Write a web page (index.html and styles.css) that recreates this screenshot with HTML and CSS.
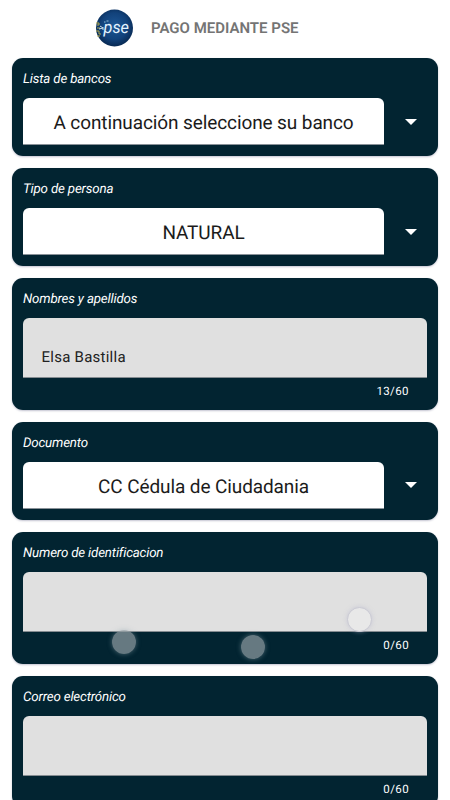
FILE: index.html
```html
<!DOCTYPE html>
<html lang="es">
<head>
<meta charset="utf-8">
<title>Pago mediante PSE</title>
<link rel="stylesheet" href="styles.css">
</head>
<body>
<header class="header">
  <svg class="logo" viewBox="0 0 38 38">
    <defs><radialGradient id="globe" cx="50%" cy="45%" r="55%"><stop offset="0" stop-color="#1d5795"/><stop offset=".65" stop-color="#12427b"/><stop offset="1" stop-color="#082952"/></radialGradient></defs>
    <circle cx="19.500" cy="19" r="18.500" fill="url(#globe)"/>
    <path d="M1 14h3v2H2m0 3h3m-4 3h3v3h2m-4 2h3" fill="none" stroke="#b2a94f" stroke-width="1"/>
    <path d="M5 17l3 2-4 1m4-2v3" fill="none" stroke="#cbdde6" stroke-width="1"/>
    <path d="M9 13h1.500M11.500 12h2" stroke="#91bdd8" stroke-width="1"/>
    <text class="logo-text" x="8.500" y="23.500" textLength="25.500" lengthAdjust="spacingAndGlyphs">pse</text>
  </svg>
  <h1 class="title">PAGO MEDIANTE PSE</h1>
</header>
<main class="form">
  <section class="card">
    <h2 class="label">Lista de bancos</h2>
    <div class="select"><div class="value">A continuación seleccione su banco</div><span class="arrow"></span></div>
  </section>
  <section class="card">
    <h2 class="label">Tipo de persona</h2>
    <div class="select"><div class="value">NATURAL</div><span class="arrow"></span></div>
  </section>
  <section class="card card-input">
    <h2 class="label">Nombres y apellidos</h2>
    <div class="input">Elsa Bastilla</div>
    <div class="counter">13/60</div>
  </section>
  <section class="card">
    <h2 class="label">Documento</h2>
    <div class="select"><div class="value">CC Cédula de Ciudadania</div><span class="arrow"></span></div>
  </section>
  <section class="card card-input">
    <h2 class="label">Numero de identificacion</h2>
    <div class="input"></div>
    <div class="counter">0/60</div>
    <span class="touch touch-left"></span>
    <span class="touch touch-middle"></span>
    <span class="touch touch-right"></span>
  </section>
  <section class="card card-input">
    <h2 class="label">Correo electrónico</h2>
    <div class="input"></div>
    <div class="counter">0/60</div>
  </section>
</main>
</body>
</html>
```
FILE: styles.css
```css
* { box-sizing: border-box; }
body {
  margin: 0;
  height: 800px;
  overflow: hidden;
  background: #fff;
  font-family: Roboto, "Liberation Sans", sans-serif;
  text-rendering: geometricPrecision;
}
.header {
  display: flex;
  align-items: center;
  height: 58px;
  padding: 0 0 2px 95px;
}
.logo { width: 38px; height: 38px; }
.logo-text {
  font: italic 17px Roboto, sans-serif;
  fill: #e4f3ff;
}
.title {
  margin: 0 0 0 18px;
  font-size: 15px;
  line-height: 20px;
  font-weight: 600;
  color: #747474;
  white-space: nowrap;
}
.form {
  display: flex;
  flex-direction: column;
  gap: 12px;
  padding: 0 12px;
}
.card {
  position: relative;
  flex: none;
  height: 98px;
  padding: 12px 11px 0;
  border-radius: 11px;
  background: #022431;
  box-shadow: 0 1px 2px rgba(20, 20, 70, .25);
}
.card-input { height: 131.8px; }
.label {
  margin: 0 0 8.4px;
  font-size: 13.3px;
  line-height: 20px;
  letter-spacing: -.16px;
  font-style: italic;
  font-weight: 400;
  color: #fff;
}
.select { display: flex; align-items: center; }
.value {
  width: 361px;
  height: 46.6px;
  border-radius: 6px 6px 0 0;
  border-bottom: 1px solid #899198;
  background: #fff;
  color: #1b1b1b;
  font-size: 19px;
  line-height: 49px;
  letter-spacing: -.1px;
  text-align: center;
}
.arrow {
  margin-left: 21px;
  border: 6px solid transparent;
  border-top-color: #fff;
  border-bottom: 0;
}
.input {
  height: 59.6px;
  padding: 29px 18.5px 0;
  border-radius: 6px 6px 0 0;
  border-bottom: 1px solid #858c91;
  background: #e0e0e0;
  color: #222;
  font-size: 15px;
  line-height: 20px;
  letter-spacing: .25px;
}
.counter {
  padding: 5px 18px 0 0;
  color: #fff;
  font-size: 11.5px;
  line-height: 16px;
  letter-spacing: .4px;
  text-align: right;
}
.touch {
  position: absolute;
  width: 24px;
  height: 24px;
  border-radius: 50%;
  background: rgba(145, 158, 164, .7);
  box-shadow: 0 0 5px rgba(145, 165, 175, .5);
}
.touch-left { left: 100px; top: 98px; }
.touch-middle { left: 229px; top: 103.5px; }
.touch-right {
  left: 335px;
  top: 75.5px;
  width: 25px;
  height: 25px;
  border: 1px solid #cacad3;
  background: #e8e8e8;
  box-shadow: 0 0 4px rgba(180, 180, 205, .5);
}
```
